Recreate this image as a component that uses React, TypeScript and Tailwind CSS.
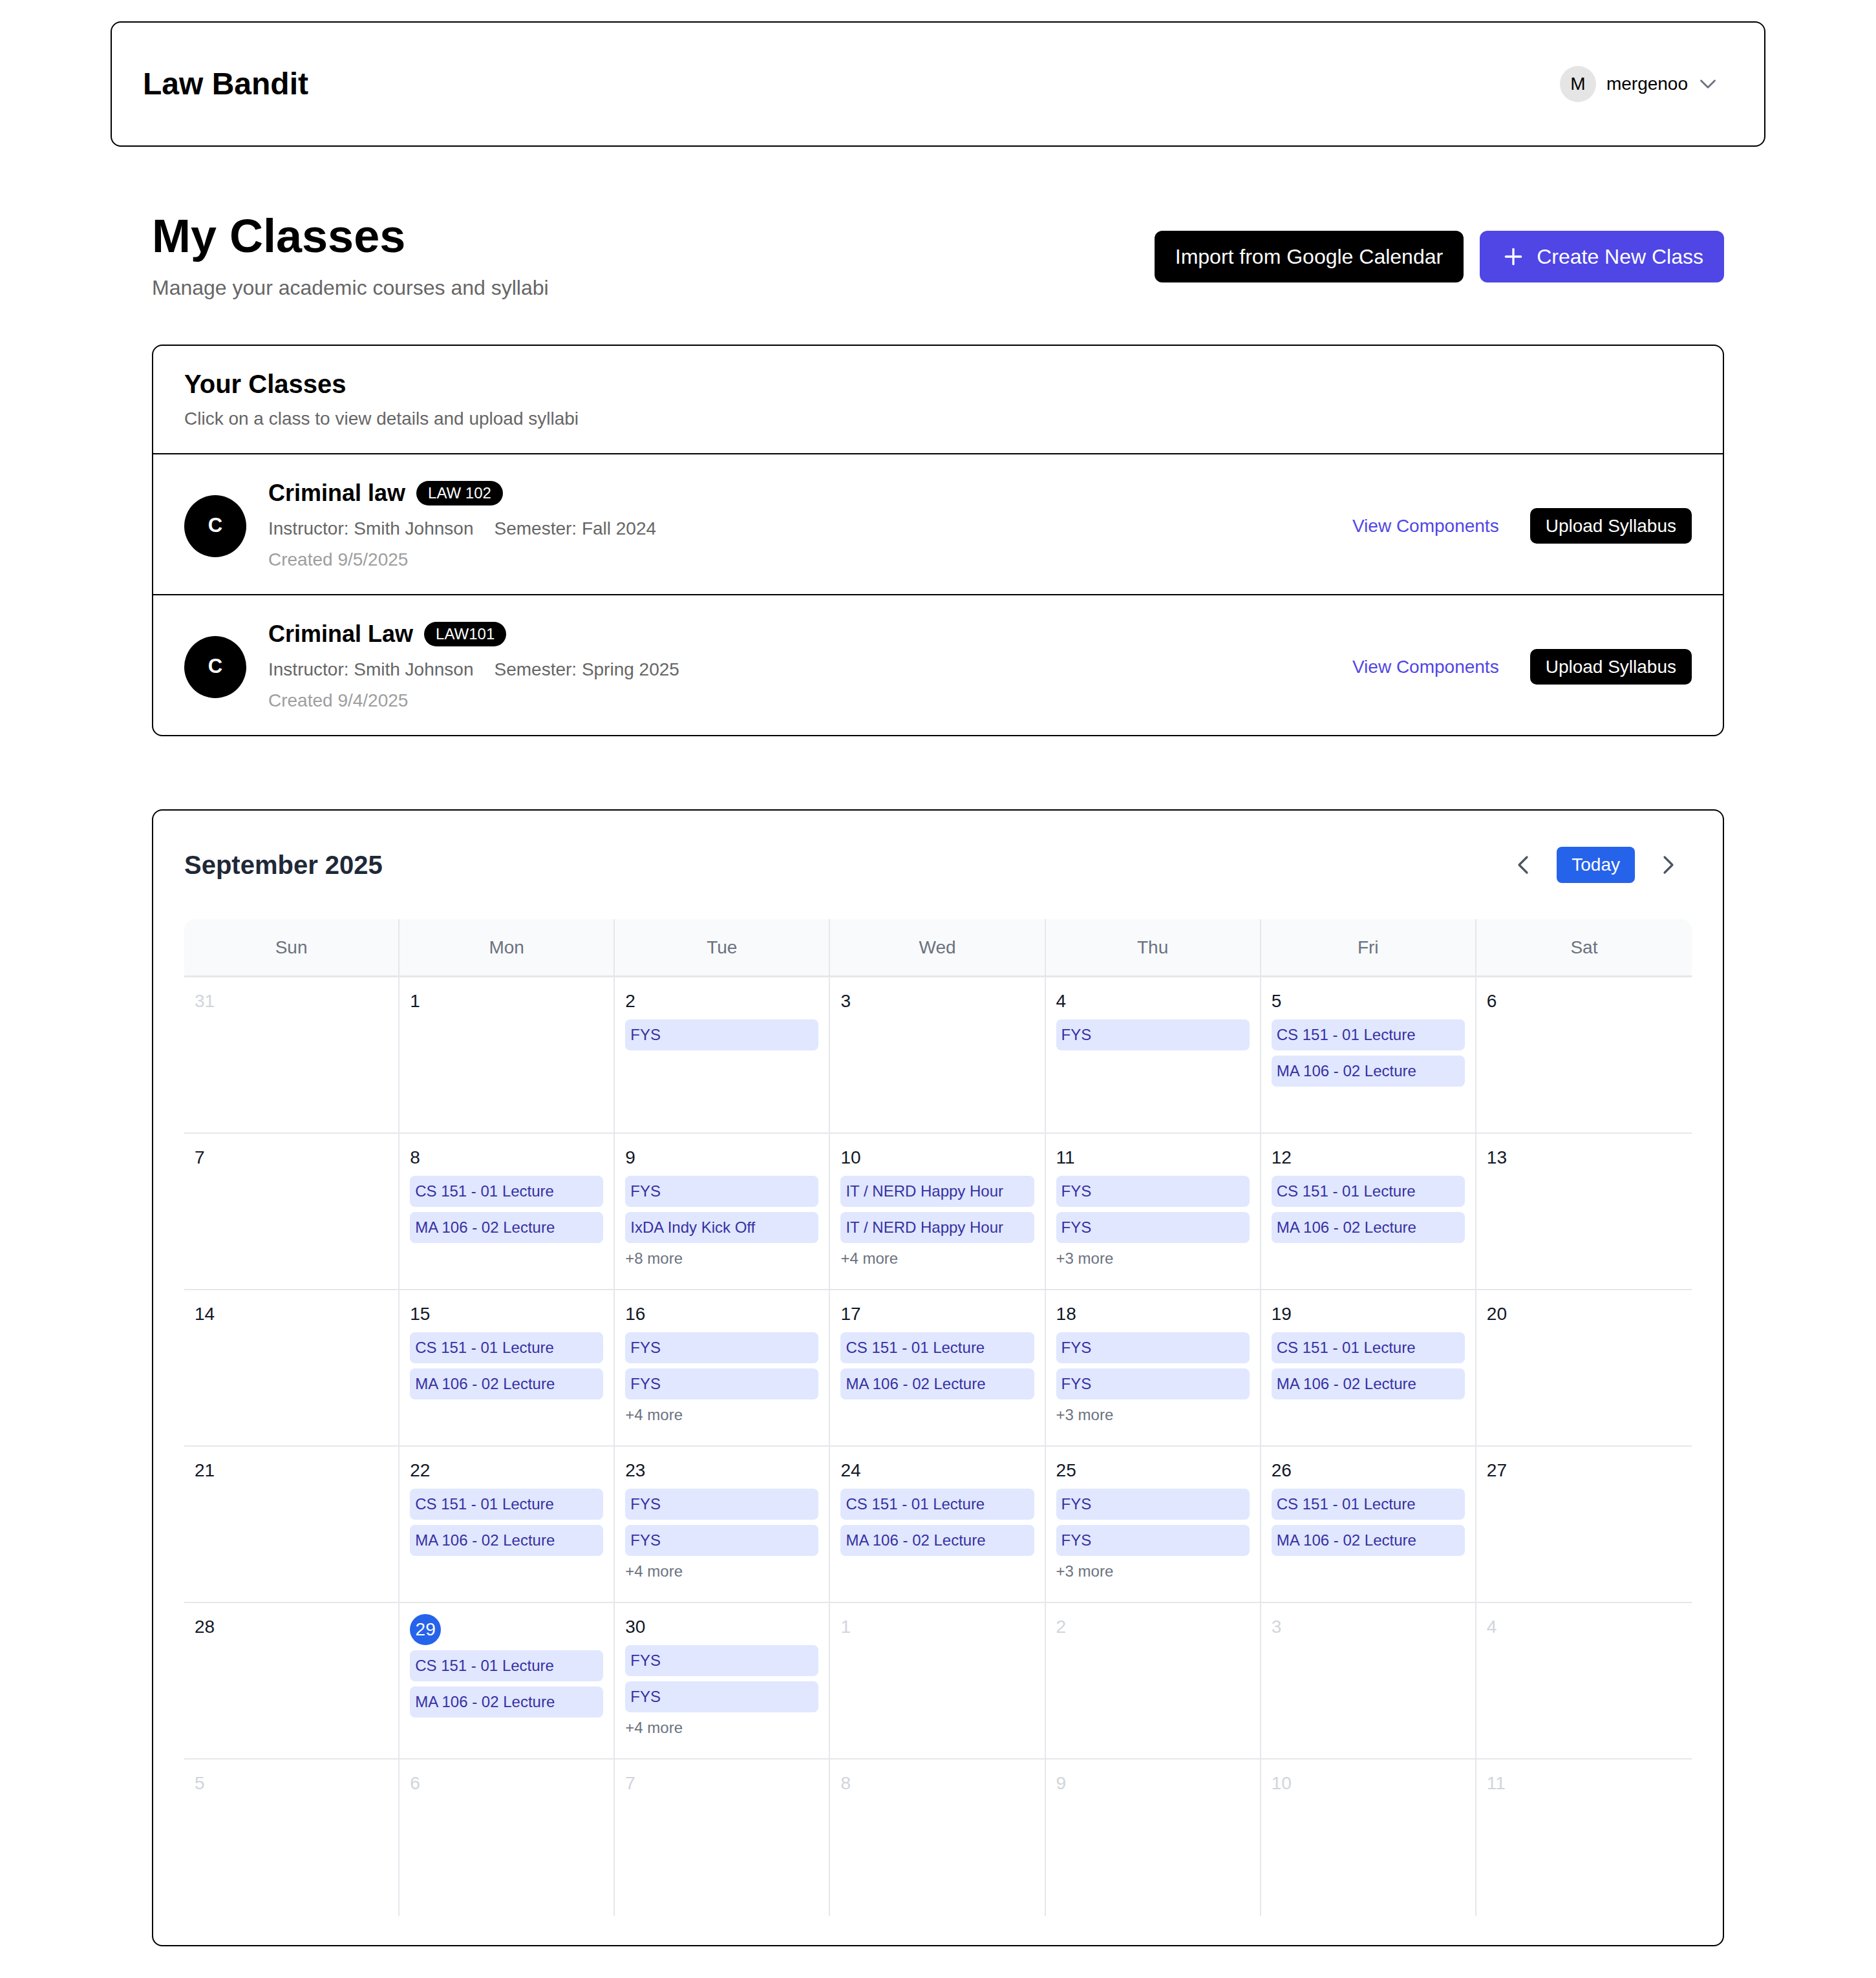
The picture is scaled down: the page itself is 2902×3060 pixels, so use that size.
import React from "react";
import { ChevronDown, ChevronLeft, ChevronRight, Plus } from "lucide-react";

type Cell = { d: number; muted?: boolean; today?: boolean; ev?: string[]; more?: number };

const CS = "CS 151 - 01 Lecture";
const MA = "MA 106 - 02 Lecture";
const NERD = "IT / NERD Happy Hour";

const weeks: Cell[][] = [
  [{ d: 31, muted: true }, { d: 1 }, { d: 2, ev: ["FYS"] }, { d: 3 }, { d: 4, ev: ["FYS"] }, { d: 5, ev: [CS, MA] }, { d: 6 }],
  [{ d: 7 }, { d: 8, ev: [CS, MA] }, { d: 9, ev: ["FYS", "IxDA Indy Kick Off"], more: 8 }, { d: 10, ev: [NERD, NERD], more: 4 }, { d: 11, ev: ["FYS", "FYS"], more: 3 }, { d: 12, ev: [CS, MA] }, { d: 13 }],
  [{ d: 14 }, { d: 15, ev: [CS, MA] }, { d: 16, ev: ["FYS", "FYS"], more: 4 }, { d: 17, ev: [CS, MA] }, { d: 18, ev: ["FYS", "FYS"], more: 3 }, { d: 19, ev: [CS, MA] }, { d: 20 }],
  [{ d: 21 }, { d: 22, ev: [CS, MA] }, { d: 23, ev: ["FYS", "FYS"], more: 4 }, { d: 24, ev: [CS, MA] }, { d: 25, ev: ["FYS", "FYS"], more: 3 }, { d: 26, ev: [CS, MA] }, { d: 27 }],
  [{ d: 28 }, { d: 29, today: true, ev: [CS, MA] }, { d: 30, ev: ["FYS", "FYS"], more: 4 }, { d: 1, muted: true }, { d: 2, muted: true }, { d: 3, muted: true }, { d: 4, muted: true }],
  [{ d: 5, muted: true }, { d: 6, muted: true }, { d: 7, muted: true }, { d: 8, muted: true }, { d: 9, muted: true }, { d: 10, muted: true }, { d: 11, muted: true }],
];

const days = ["Sun", "Mon", "Tue", "Wed", "Thu", "Fri", "Sat"];

function DayCell({ c, col, row }: { c: Cell; col: number; row: number }) {
  return (
    <div
      className={`h-[242px] min-w-0 px-[16px] pt-[17px] border-[#e5e7eb] ${col < 6 ? "border-r-2" : ""} ${row < 5 ? "border-b-2" : ""}`}
    >
      {c.today ? (
        <div className="w-[48px] h-[48px] rounded-full bg-[#2563eb] text-white flex items-center justify-center text-[28px]">
          {c.d}
        </div>
      ) : (
        <div className={`text-[28px] leading-[40px] ${c.muted ? "text-[#d1d5db]" : "text-[#111827]"}`}>{c.d}</div>
      )}
      {c.ev?.map((e, i) => (
        <div
          key={i}
          className="mt-[8px] rounded-[8px] bg-[#e0e7ff] px-[8px] text-[24px] leading-[48px] text-[#3730a3] truncate"
        >
          {e}
        </div>
      ))}
      {c.more ? (
        <div className="mt-[8px] text-[24px] leading-[32px] text-[#6b7280]">+{c.more} more</div>
      ) : null}
    </div>
  );
}

function ClassRow({ title, code, semester, created }: { title: string; code: string; semester: string; created: string }) {
  return (
    <div className="border-t-2 border-black px-[48px] pt-[38px] pb-[33px] flex items-center">
      <div className="w-[96px] h-[96px] rounded-full bg-black text-white flex items-center justify-center text-[31px] font-bold shrink-0">
        C
      </div>
      <div className="ml-[34px] flex-1">
        <div className="flex items-center h-[44px]">
          <span className="text-[36px] font-bold text-black leading-[44px]">{title}</span>
          <span className="ml-[17px] h-[38px] rounded-full bg-black text-white text-[24px] leading-[38px] px-[18px]">{code}</span>
        </div>
        <div className="mt-[13px] flex text-[28px] leading-[40px] text-[#666666]">
          <span>Instructor: Smith Johnson</span>
          <span className="ml-[32px]">Semester: {semester}</span>
        </div>
        <div className="mt-[8px] text-[28px] leading-[40px] text-[#9e9e9e]">Created {created}</div>
      </div>
      <div className="flex items-center">
        <span className="text-[28px] text-[#4f46e5]">View Components</span>
        <button className="ml-[48px] h-[55px] px-[24px] rounded-[10px] bg-black text-white text-[28px]">Upload Syllabus</button>
      </div>
    </div>
  );
}

export default function App() {
  return (
    <div className="min-h-screen bg-white font-['Liberation_Sans',Arial,sans-serif] text-black pb-[48px]">
      <header className="mx-auto max-w-[2560px] mt-[33px] h-[194px] border-2 border-black rounded-[16px] pl-[48px] pr-[66px] flex items-center justify-between">
        <div className="text-[48px] font-bold">Law Bandit</div>
        <div className="flex items-center">
          <div className="w-[56px] h-[56px] rounded-full bg-[#e5e5e5] flex items-center justify-center text-[28px]">M</div>
          <span className="ml-[16px] text-[28px]">mergenoo</span>
          <ChevronDown className="ml-[10px] w-[42px] h-[42px] text-[#6b7280]" strokeWidth={1.6} />
        </div>
      </header>

      <main className="mx-auto max-w-[2560px] px-[64px] pt-[98px]">
        <div className="flex items-center justify-between">
          <div>
            <h1 className="text-[72px] leading-[80px] font-bold">My Classes</h1>
            <p className="mt-[16px] text-[32px] leading-[48px] text-[#666666]">Manage your academic courses and syllabi</p>
          </div>
          <div className="flex items-center gap-[25px]">
            <button className="h-[80px] px-[32px] rounded-[12px] bg-black text-white text-[32px]">Import from Google Calendar</button>
            <button className="h-[80px] px-[32px] rounded-[12px] bg-[#4f46e5] text-white text-[32px] flex items-center gap-[16px]">
              <Plus className="w-[40px] h-[40px]" strokeWidth={2} />
              Create New Class
            </button>
          </div>
        </div>

        <section className="mt-[64px] border-2 border-black rounded-[16px] overflow-hidden">
          <div className="px-[48px] pt-[37px] pb-[33px]">
            <h2 className="text-[40px] leading-[44px] font-bold">Your Classes</h2>
            <p className="mt-[12px] text-[28px] leading-[40px] text-[#666666]">Click on a class to view details and upload syllabi</p>
          </div>
          <ClassRow title="Criminal law" code="LAW 102" semester="Fall 2024" created="9/5/2025" />
          <ClassRow title="Criminal Law" code="LAW101" semester="Spring 2025" created="9/4/2025" />
        </section>

        <section className="mt-[113px] border-2 border-black rounded-[16px] px-[48px] pt-[48px] pb-[45px]">
          <div className="flex items-center justify-between h-[72px]">
            <h2 className="text-[40px] font-bold text-[#1f2937]">September 2025</h2>
            <div className="flex items-center gap-[16px]">
              <button className="p-[12px] text-[#4b5563]">
                <ChevronLeft className="w-[48px] h-[48px]" strokeWidth={1.6} />
              </button>
              <button className="h-[56px] px-[23px] rounded-[8px] bg-[#2563eb] text-white text-[28px]">Today</button>
              <button className="p-[12px] text-[#4b5563]">
                <ChevronRight className="w-[48px] h-[48px]" strokeWidth={1.6} />
              </button>
            </div>
          </div>

          <div className="mt-[48px]">
            <div className="grid grid-cols-7 bg-[#f9fafb] rounded-t-[16px] border-b-[3px] border-[#e5e7eb]">
              {days.map((d, i) => (
                <div
                  key={d}
                  className={`h-[87px] flex items-center justify-center text-[28px] text-[#6b7280] border-[#e5e7eb] ${i < 6 ? "border-r-2" : ""}`}
                >
                  {d}
                </div>
              ))}
            </div>
            {weeks.map((w, r) => (
              <div key={r} className="grid grid-cols-7">
                {w.map((c, i) => (
                  <DayCell key={i} c={c} col={i} row={r} />
                ))}
              </div>
            ))}
          </div>
        </section>
      </main>
    </div>
  );
}
